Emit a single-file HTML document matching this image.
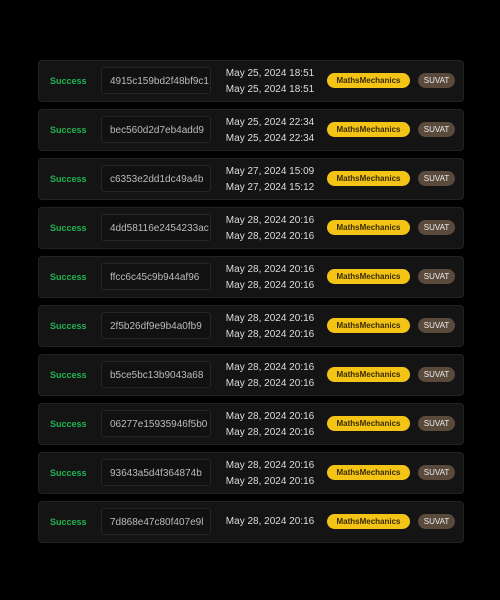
<!DOCTYPE html>
<html><head><style>
body{margin:0;background:#000;width:500px;height:600px;font-family:"Liberation Sans",sans-serif;position:relative;overflow:hidden}
.r{position:absolute;left:38px;width:424px;height:40px;background:#141414;border:1px solid #222;border-radius:4px}
.s{position:absolute;left:11px;top:15px;font-size:9px;font-weight:bold;color:#1fb451}
.h{position:absolute;left:62px;top:6px;width:110px;height:27px;border:1px solid #262626;border-radius:3px;background:#111;color:#bbb;font-size:10px;line-height:27px;padding-left:8px;box-sizing:border-box;overflow:hidden;white-space:nowrap}
.d{position:absolute;left:180px;width:102px;text-align:center;color:#ddd;font-size:10px;line-height:16px}
.y{position:absolute;left:288px;top:12px;width:83px;height:15px;border-radius:8px;background:#f3c316;color:#3a2c00;font-size:8px;font-weight:bold;text-align:center;line-height:15px}
.v{position:absolute;left:379px;top:12px;width:37px;height:15px;border-radius:8px;background:#5a4a3b;color:#eee;font-size:8px;text-align:center;line-height:15px}
</style></head><body>
<div class="r" style="top:60px"><span class="s">Success</span><div class="h">4915c159bd2f48bf9c1</div><div class="d" style="top:5px">May 25, 2024 18:51<br>May 25, 2024 18:51</div><div class="y">MathsMechanics</div><div class="v">SUVAT</div></div>
<div class="r" style="top:109px"><span class="s">Success</span><div class="h">bec560d2d7eb4add9</div><div class="d" style="top:5px">May 25, 2024 22:34<br>May 25, 2024 22:34</div><div class="y">MathsMechanics</div><div class="v">SUVAT</div></div>
<div class="r" style="top:158px"><span class="s">Success</span><div class="h">c6353e2dd1dc49a4b</div><div class="d" style="top:5px">May 27, 2024 15:09<br>May 27, 2024 15:12</div><div class="y">MathsMechanics</div><div class="v">SUVAT</div></div>
<div class="r" style="top:207px"><span class="s">Success</span><div class="h">4dd58116e2454233ac</div><div class="d" style="top:5px">May 28, 2024 20:16<br>May 28, 2024 20:16</div><div class="y">MathsMechanics</div><div class="v">SUVAT</div></div>
<div class="r" style="top:256px"><span class="s">Success</span><div class="h">ffcc6c45c9b944af96</div><div class="d" style="top:5px">May 28, 2024 20:16<br>May 28, 2024 20:16</div><div class="y">MathsMechanics</div><div class="v">SUVAT</div></div>
<div class="r" style="top:305px"><span class="s">Success</span><div class="h">2f5b26df9e9b4a0fb9</div><div class="d" style="top:5px">May 28, 2024 20:16<br>May 28, 2024 20:16</div><div class="y">MathsMechanics</div><div class="v">SUVAT</div></div>
<div class="r" style="top:354px"><span class="s">Success</span><div class="h">b5ce5bc13b9043a68</div><div class="d" style="top:5px">May 28, 2024 20:16<br>May 28, 2024 20:16</div><div class="y">MathsMechanics</div><div class="v">SUVAT</div></div>
<div class="r" style="top:403px"><span class="s">Success</span><div class="h">06277e15935946f5b0</div><div class="d" style="top:5px">May 28, 2024 20:16<br>May 28, 2024 20:16</div><div class="y">MathsMechanics</div><div class="v">SUVAT</div></div>
<div class="r" style="top:452px"><span class="s">Success</span><div class="h">93643a5d4f364874b</div><div class="d" style="top:5px">May 28, 2024 20:16<br>May 28, 2024 20:16</div><div class="y">MathsMechanics</div><div class="v">SUVAT</div></div>
<div class="r" style="top:501px"><span class="s">Success</span><div class="h">7d868e47c80f407e9l</div><div class="d" style="top:12px">May 28, 2024 20:16</div><div class="y">MathsMechanics</div><div class="v">SUVAT</div></div>
</body></html>
